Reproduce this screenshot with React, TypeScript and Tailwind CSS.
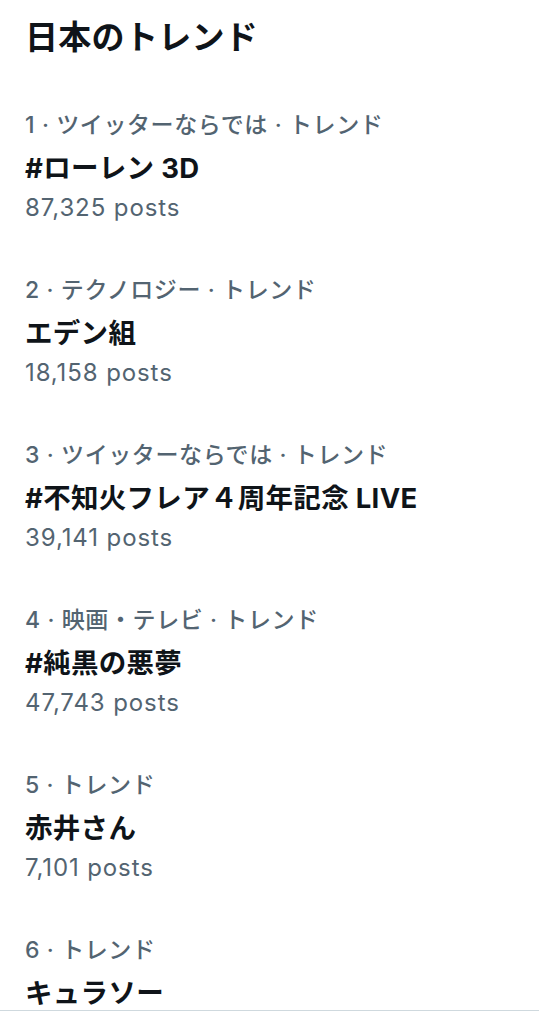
import React from "react";

const items = [
  { cat: "1 · ツイッターならでは · トレンド", name: "#ローレン 3D", posts: "87,325 posts" },
  { cat: "2 · テクノロジー · トレンド", name: "エデン組", posts: "18,158 posts" },
  { cat: "3 · ツイッターならでは · トレンド", name: "#不知火フレア４周年記念 LIVE", posts: "39,141 posts" },
  { cat: "4 · 映画・テレビ · トレンド", name: "#純黒の悪夢", posts: "47,743 posts" },
  { cat: "5 · トレンド", name: "赤井さん", posts: "7,101 posts" },
  { cat: "6 · トレンド", name: "キュラソー", posts: "" },
];

export default function App() {
  return (
    <div
      className="w-[539px] h-[1011px] overflow-hidden bg-white pl-[25px] border-b border-[#cfd9de]"
      style={{ fontFamily: 'Inter, "Noto Sans CJK JP", sans-serif' }}
    >
      <h1 className="pt-[17px] text-[33px] leading-[40px] font-bold text-[#0f1419] tracking-[0.3px]">日本のトレンド</h1>
      <div className="mt-[53px] flex flex-col">
        {items.map((it, i) => (
          <div key={i} className="h-[165px] flex flex-col">
            <div className="text-[23px] leading-[30px] text-[#536471] font-medium tracking-[0.6px]">{it.cat}</div>
            <div className="mt-[8px] text-[27.5px] leading-[40px] font-bold text-[#0f1419] tracking-[0.3px]">{it.name}</div>
            {it.posts && <div className="mt-[4px] text-[24px] leading-[32px] text-[#536471] tracking-[0.9px]">{it.posts}</div>}
          </div>
        ))}
      </div>
    </div>
  );
}
